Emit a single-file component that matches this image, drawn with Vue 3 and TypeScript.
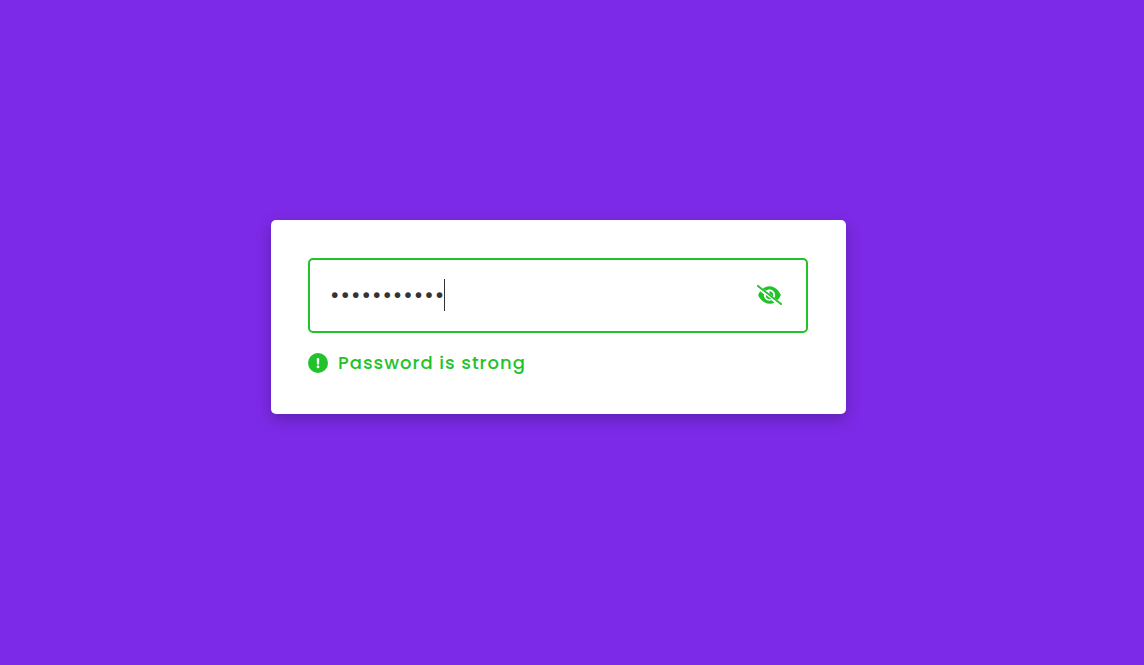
<script setup lang="ts">
import { computed, ref } from 'vue'

const password = ref('Secret#2024')
const visible = ref(false)
const input = ref<HTMLInputElement | null>(null)

const inputType = computed(() => (visible.value ? 'text' : 'password'))
const message = computed(() => {
  if (password.value.length >= 8) return 'Password is strong'
  if (password.value.length >= 5) return 'Password is medium'
  return 'Password is weak'
})

function toggle(): void {
  visible.value = !visible.value
  input.value?.focus()
}
</script>

<template>
  <main class="page">
    <section class="card">
      <div class="field">
        <div class="entry">
          <input
            id="password"
            ref="input"
            v-model="password"
            class="field-input"
            :type="inputType"
            aria-label="Password"
            aria-describedby="strength"
          />
          <span v-if="!visible" class="caret" :style="{ left: `${Math.round(password.length * 10.36)}px` }"></span>
        </div>
        <button class="toggle" type="button" aria-label="Toggle password visibility" @click="toggle">
          <svg class="eye" viewBox="0 0 640 512" aria-hidden="true">
            <path
              fill-rule="evenodd"
              d="M150 93C195 58 252 32 320 32c81 0 145 37 193 81c46 43 78 95 93 131c3 8 3 16 0 24c-14 33-41 78-80 119L446 325c12-20 18-44 18-69c0-80-64-144-144-144c-37 0-71 14-97 37.500zM83 161.500L181 238c-3 6-5 12-5 18c0 80 64 144 144 144c19 0 36-4 53-10l73 58c-36 19-78 32-126 32c-81 0-145-37-193-81c-46-43-78-95-93-131c-3-8-3-16 0-24c10-23 26-53 49-82.500z"
            />
            <path d="M313 220c5-9 7-18 7-28c0-11-3-22-8-31c58-5 104 40 104 95c0 14-3 26-8 38zM225 250L362 357c-64 32-137-20-137-96z" />
            <path d="M39 5L631 469c10 8 12 23 4 34c-8 10-23 12-34 4L9 43C-1 35-3 20 5 9C13-1 28-3 39 5z" />
          </svg>
        </button>
      </div>
      <p id="strength" class="indicator">
        <svg class="mark" viewBox="0 0 512 512" aria-hidden="true">
          <path
            fill-rule="evenodd"
            d="M256 0a256 256 0 1 0 0 512a256 256 0 1 0 0-512zM256 128q32 0 32 28l-4 116q0 28-28 28t-28-28l-4-116q0-28 32-28zM256 320a36 36 0 1 1 0 72a36 36 0 1 1 0-72z"
          />
        </svg>
        <span>{{ message }}</span>
      </p>
    </section>
  </main>
</template>

<style>
body {
  margin: 0;
  background: #7d2ae8;
}
</style>

<style scoped>
.page {
  box-sizing: border-box;
  min-height: 100vh;
  padding: 0 27px 31px 0;
  display: flex;
  align-items: center;
  justify-content: center;
  background: #7d2ae8;
  font-family: Poppins, Inter, "Open Sans", sans-serif;
}

.card {
  box-sizing: border-box;
  width: 100%;
  max-width: 575px;
  padding: 38px 38px 38px 37px;
  border-radius: 5px;
  background: #fff;
  box-shadow: 0 5px 15px rgba(0, 0, 0, 0.25);
}

.field {
  display: flex;
  align-items: center;
  box-sizing: border-box;
  height: 75px;
  padding: 0 24px 1px 20px;
  border: 2px solid #22c32a;
  border-radius: 5px;
}

.entry {
  position: relative;
  flex: 1;
  display: flex;
  min-width: 0;
}

.field-input {
  flex: 1;
  min-width: 0;
  height: 32px;
  padding: 0;
  border: 0;
  outline: none;
  background: transparent;
  color: #333;
  caret-color: transparent;
  font-family: inherit;
  font-size: 23px;
  font-weight: 400;
  letter-spacing: 1px;
}

.caret {
  position: absolute;
  top: 0;
  width: 1px;
  height: 32px;
  background: #333;
  pointer-events: none;
}

.toggle {
  display: flex;
  padding: 0;
  border: 0;
  background: transparent;
  cursor: pointer;
}

.eye {
  width: 25px;
  height: 20px;
  fill: #22c32a;
}

.indicator {
  display: flex;
  align-items: center;
  gap: 10px;
  margin: 16px 0 0;
  color: #22c32a;
  font-size: 18px;
  font-weight: 500;
  line-height: 27px;
  letter-spacing: 1px;
}

.mark {
  width: 20px;
  height: 20px;
  fill: #22c32a;
}
</style>
